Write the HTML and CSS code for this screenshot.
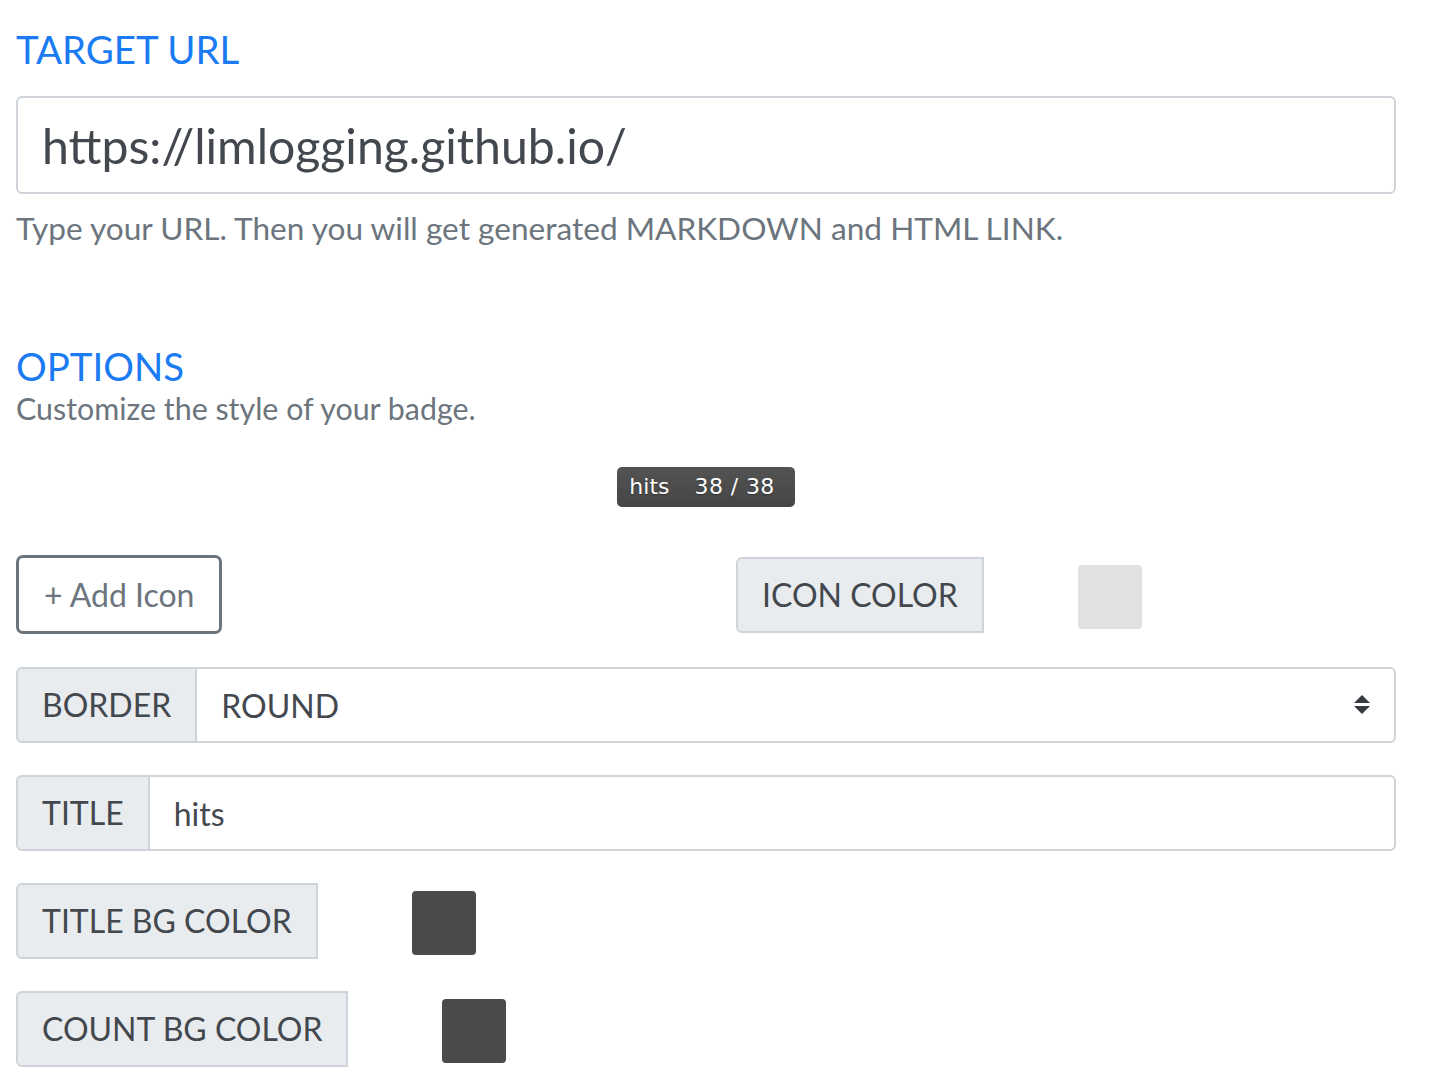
FILE: index.html
```html
<!DOCTYPE html>
<html lang="en">
<head>
<meta charset="utf-8">
<title>Hits badge</title>
<link rel="stylesheet" href="styles.css">
</head>
<body>
<main class="page">
  <section class="section">
    <h2 class="heading">TARGET URL</h2>
    <div class="url-input">https://limlogging.github.io/</div>
    <p class="help">Type your URL. Then you will get generated MARKDOWN and HTML LINK.</p>
  </section>

  <section class="section options">
    <h2 class="heading">OPTIONS</h2>
    <p class="sub">Customize the style of your badge.</p>

    <div class="badge-wrap">
      <div class="badge"><span class="badge-title">hits</span><span class="badge-count">38 / 38</span></div>
    </div>

    <div class="two-col">
      <div class="col">
        <button class="btn-outline" type="button">+ Add Icon</button>
      </div>
      <div class="col">
        <div class="color-group">
          <span class="label label-solo">ICON COLOR</span>
          <span class="swatch swatch-light"></span>
        </div>
      </div>
    </div>

    <div class="group">
      <span class="label">BORDER</span>
      <div class="field select">ROUND
        <svg class="arrows" width="16" height="20" viewBox="0 0 16 20"><polygon points="0,8 8,0 16,8" fill="#343a40"/><polygon points="0,11 16,11 8,19" fill="#343a40"/></svg>
      </div>
    </div>

    <div class="group">
      <span class="label">TITLE</span>
      <div class="field">hits</div>
    </div>

    <div class="color-group row-gap">
      <span class="label label-solo">TITLE BG COLOR</span>
      <span class="swatch swatch-dark"></span>
    </div>

    <div class="color-group row-gap">
      <span class="label label-solo">COUNT BG COLOR</span>
      <span class="swatch swatch-dark"></span>
    </div>
  </section>
</main>
</body>
</html>
```

FILE: styles.css
```css
* { box-sizing: border-box; }
html, body { margin: 0; padding: 0; background: #fff; }
body {
  font-family: Lato, "Noto Sans", sans-serif;
  color: #495057;
}
.page {
  width: 1380px;
  margin-left: 16px;
  padding-top: 26px;
}
.heading {
  margin: 0;
  font-size: 38.4px;
  line-height: 46px;
  font-weight: 400;
  color: #1a7bf2;
}
.url-input {
  margin-top: 24px;
  height: 98px;
  border: 2px solid #ced4da;
  border-radius: 6px;
  padding: 0 24px;
  display: flex;
  align-items: center;
  font-size: 48.2px;
  color: #43484e;
}
.help {
  margin: 10px 0 0;
  font-size: 31.6px;
  line-height: 48px;
  color: #6c757d;
}
.options { margin-top: 91px; }
.sub {
  margin: 0;
  font-size: 30.4px;
  line-height: 38px;
  color: #6c757d;
}
.badge-wrap {
  margin-top: 40px;
  display: flex;
  justify-content: center;
}
.badge {
  display: flex;
  height: 40px;
  border-radius: 5px;
  background: linear-gradient(to bottom, #535353, #454545);
  font-family: "DejaVu Sans", Verdana, sans-serif;
  font-size: 22px;
  line-height: 40px;
  color: #fff;
  text-shadow: 0 1px 1px rgba(0,0,0,0.35);
}
.badge-title { padding: 0 12px 0 12px; }
.badge-count { padding: 0 20px 0 13px; letter-spacing: 0.4px; }

.two-col {
  margin-top: 48px;
  display: grid;
  grid-template-columns: 1fr 1fr;
  column-gap: 60px;
  align-items: center;
  height: 79px;
}
.btn-outline {
  font-family: inherit;
  font-size: 32px;
  line-height: 48px;
  height: 79px;
  padding: 0 25px;
  border: 3px solid #6c757d;
  border-radius: 7px;
  background: #fff;
  color: #6c757d;
  cursor: pointer;
}
.label {
  display: flex;
  align-items: center;
  height: 76px;
  padding: 0 24px;
  background: #e9ecef;
  border: 2px solid #ced4da;
  border-radius: 6px 0 0 6px;
  font-size: 32px;
  line-height: 48px;
  color: #43484e;
  white-space: nowrap;
}
.color-group {
  display: flex;
  align-items: flex-start;
  height: 76px;
}
.row-gap { margin-top: 32px; }
.swatch {
  display: block;
  width: 64px;
  height: 64px;
  margin-top: 8px;
  margin-left: 94px;
  border-radius: 4px;
}
.swatch-light { background: #e1e1e1; }
.swatch-dark { background: #4a4a4a; }

.group {
  display: flex;
  height: 76px;
  margin-top: 33px;
}
.group + .group { margin-top: 32px; }
.field {
  flex: 1;
  display: flex;
  align-items: center;
  border: 2px solid #ced4da;
  border-left: none;
  border-radius: 0 6px 6px 0;
  padding: 0 24px;
  font-size: 32px;
  color: #43484e;
}
.select { justify-content: space-between; }
.arrows { display: block; }
```
